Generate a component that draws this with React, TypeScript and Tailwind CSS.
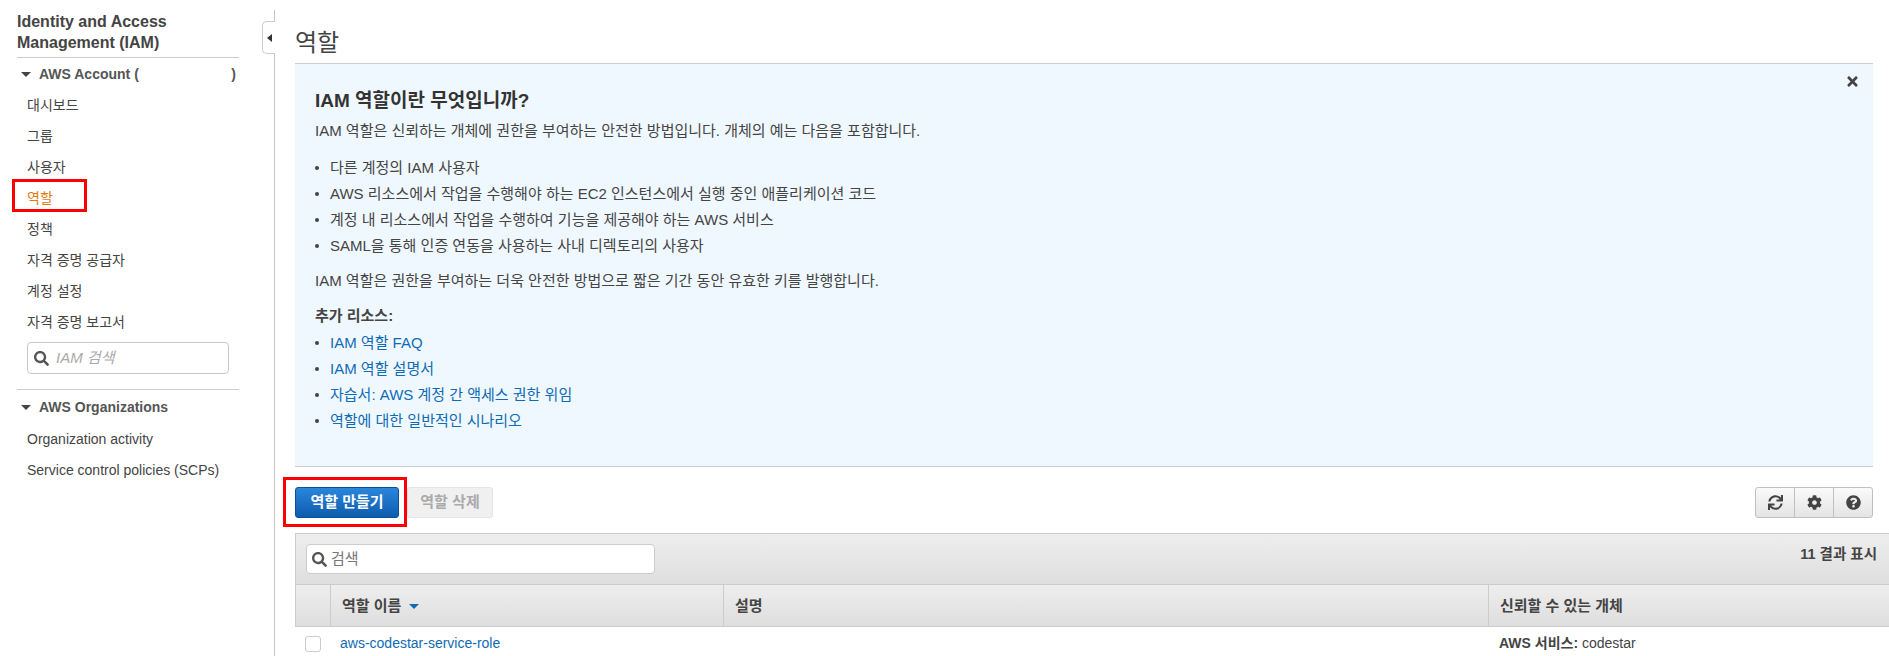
import React from 'react';
import { FaCog, FaQuestionCircle, FaSearch, FaSync, FaTimes } from 'react-icons/fa';

const font = 'font-["Liberation_Sans","Noto_Sans_CJK_KR",sans-serif]';

const navItems = ['대시보드', '그룹', '사용자', '역할', '정책', '자격 증명 공급자', '계정 설정', '자격 증명 보고서'];
const bullets = [
  '다른 계정의 IAM 사용자',
  'AWS 리소스에서 작업을 수행해야 하는 EC2 인스턴스에서 실행 중인 애플리케이션 코드',
  '계정 내 리소스에서 작업을 수행하여 기능을 제공해야 하는 AWS 서비스',
  'SAML을 통해 인증 연동을 사용하는 사내 디렉토리의 사용자',
];
const links = ['IAM 역할 FAQ', 'IAM 역할 설명서', '자습서: AWS 계정 간 액세스 권한 위임', '역할에 대한 일반적인 시나리오'];

const Caret = () => (
  <span className="w-0 h-0 border-x-[5px] border-x-transparent border-t-[5px] border-t-[#444] mr-[8px] ml-[4px]" />
);

const Sidebar = () => (
  <aside className="relative w-[275px] shrink-0 mt-[10px] border-r border-[#c8c8c8] pl-[17px] pr-[35px]">
    <h1 className="text-[16px] leading-[21px] font-bold text-[#444] pt-[1px] pb-[4px] border-b border-[#ccc]">
      Identity and Access
      <br />
      Management (IAM)
    </h1>
    <div className="flex items-center h-[32px] text-[14px] font-bold text-[#555]">
      <Caret />
      <span className="flex-1">AWS Account (</span>
      <span className="mr-[3px]">)</span>
    </div>
    <ul className="pl-[10px] text-[14px] text-[#444]">
      {navItems.map((item) => (
        <li key={item} className={`h-[31px] leading-[31px] ${item === '역할' ? 'text-[#e47911]' : ''}`}>
          {item}
        </li>
      ))}
    </ul>
    <div className="flex items-center ml-[10px] mt-[4px] w-[202px] h-[32px] border border-[#c8c8c8] rounded-[4px] pl-[6px]">
      <FaSearch className="text-[15px] text-[#555]" />
      <span className="ml-[7px] text-[15px] italic text-[#aaa]">IAM 검색</span>
    </div>
    <div className="mt-[15px] border-t border-[#ccc] flex items-center h-[35px] text-[14px] font-bold text-[#555]">
      <Caret />
      AWS Organizations
    </div>
    <ul className="pl-[10px] text-[14px] text-[#444]">
      <li className="h-[31px] leading-[31px]">Organization activity</li>
      <li className="h-[31px] leading-[31px]">Service control policies (SCPs)</li>
    </ul>
    {/* collapse tab */}
    <div className="absolute right-[-1px] top-[11px] w-[13px] h-[33px] bg-white border border-r-0 border-[#ccc] rounded-l-[5px] flex items-center justify-center">
      <span className="w-0 h-0 border-y-[4px] border-y-transparent border-r-[5px] border-r-[#333]" />
    </div>
  </aside>
);

const InfoPanel = () => (
  <section className="relative bg-[#f0f8ff] border-y border-[#ccc] h-[404px] pl-[20px] pt-[25px] text-[15px] text-[#444]">
    <FaTimes className="absolute right-[13px] top-[10px] text-[15px] text-[#444]" />
    <h2 className="text-[19px] leading-[24px] font-bold text-[#333]">IAM 역할이란 무엇입니까?</h2>
    <p className="mt-[8px] leading-[20px]">IAM 역할은 신뢰하는 개체에 권한을 부여하는 안전한 방법입니다. 개체의 예는 다음을 포함합니다.</p>
    <ul className="mt-[14px]">
      {bullets.map((b) => (
        <li key={b} className="flex items-center h-[26px]">
          <span className="w-[4px] h-[4px] rounded-full bg-[#444] mr-[11px]" />
          <span>{b}</span>
        </li>
      ))}
    </ul>
    <p className="mt-[12px] leading-[20px]">IAM 역할은 권한을 부여하는 더욱 안전한 방법으로 짧은 기간 동안 유효한 키를 발행합니다.</p>
    <p className="mt-[15px] leading-[20px] font-bold">추가 리소스:</p>
    <ul className="mt-[4px]">
      {links.map((l) => (
        <li key={l} className="flex items-center h-[26px]">
          <span className="w-[4px] h-[4px] rounded-full bg-[#444] mr-[11px]" />
          <span className="text-[#0f6bb5]">{l}</span>
        </li>
      ))}
    </ul>
  </section>
);

const Toolbar = () => (
  <div className="relative flex items-start justify-between h-[66px] pt-[20px]">
    <div className="flex gap-[8px]">
      <button className="w-[104px] h-[31px] rounded-[3px] border border-[#0d4f94] bg-gradient-to-b from-[#2a86dc] to-[#0d5cae] text-white text-[15px] font-bold">
        역할 만들기
      </button>
      <button className="w-[86px] h-[31px] rounded-[3px] border border-[#e4e4e4] bg-[#f0f0f0] text-[#aaa] text-[15px] font-bold">
        역할 삭제
      </button>
    </div>
    <div className="flex h-[31px] rounded-[3px] border border-[#c0c0c0] bg-gradient-to-b from-[#fafafa] to-[#e4e4e4] text-[#444] text-[15px]">
      <span className="w-[39px] flex items-center justify-center border-r border-[#c0c0c0]"><FaSync /></span>
      <span className="w-[39px] flex items-center justify-center border-r border-[#c0c0c0]"><FaCog /></span>
      <span className="w-[38px] flex items-center justify-center"><FaQuestionCircle /></span>
    </div>
    {/* annotation */}
    <div className="absolute left-[-12px] top-[10px] w-[124px] h-[50px] border-[3px] border-[#ff0000]" />
  </div>
);

const RolesTable = () => (
  <div className="mr-[-16px] text-[14px]">
    <div className="flex justify-between h-[52px] border border-[#ccc] border-r-0 bg-gradient-to-b from-[#eee] to-[#dedede] pl-[10px] pr-[12px] pt-[10px]">
      <div className="flex items-center w-[349px] h-[30px] bg-white border border-[#ccc] rounded-[4px] pl-[5px] text-[15px] text-[#777]">
        <FaSearch className="text-[#555] text-[15px]" />
        <span className="ml-[4px]">검색</span>
      </div>
      <span className="font-bold text-[14.5px] text-[#444]">11 결과 표시</span>
    </div>
    <div className="grid grid-cols-[34px_393px_765px_1fr] h-[42px] border border-t-0 border-r-0 border-[#ccc] bg-gradient-to-b from-[#eee] to-[#dedede] text-[15px] font-bold text-[#444] leading-[41px]">
      <div />
      <div className="border-l border-[#ccc] pl-[11px] flex items-center">
        역할 이름
        <span className="ml-[8px] mt-[2px] w-0 h-0 border-x-[5px] border-x-transparent border-t-[5px] border-t-[#0f6bb5]" />
      </div>
      <div className="border-l border-[#ccc] pl-[11px]">설명</div>
      <div className="border-l border-[#ccc] pl-[11px]">신뢰할 수 있는 개체</div>
    </div>
    <div className="grid grid-cols-[34px_393px_765px_1fr] h-[33px] items-center pl-[1px]">
      <div className="pl-[9px]">
        <div className="w-[16px] h-[16px] border border-[#ccc] rounded-[3px] bg-white" />
      </div>
      <div className="pl-[10px] text-[#0f6bb5]">aws-codestar-service-role</div>
      <div />
      <div className="pl-[11px] text-[#444]"><b>AWS 서비스:</b> codestar</div>
    </div>
  </div>
);

export default function App() {
  return (
    <div className={`relative flex h-[656px] w-[1889px] overflow-hidden bg-white ${font}`}>
      <Sidebar />
      <main className="flex-1 pl-[20px] pr-[16px]">
        <div className="h-[63px] pt-[28px] text-[24px] leading-[30px] text-[#444]">역할</div>
        <InfoPanel />
        <Toolbar />
        <RolesTable />
      </main>
      {/* annotation */}
      <div className="absolute left-[12px] top-[179px] w-[75px] h-[33px] border-[3px] border-[#ff0000]" />
    </div>
  );
}
